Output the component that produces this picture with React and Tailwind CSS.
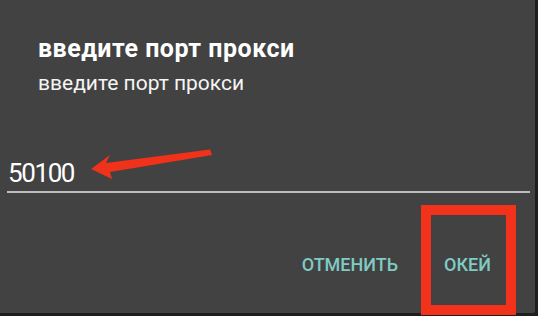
import React from "react";

export default function App() {
  return (
    <div className="w-[538px] h-[316px] bg-[#1e1e1e] relative overflow-hidden" style={{ fontFamily: "Roboto, 'Noto Sans', sans-serif" }}>
      <div className="w-[535px] h-[313px] bg-[#424242] flex flex-col rounded-br-[2px]">
        <div className="pl-[38px] pt-[34px]">
          <div className="text-white font-bold text-[25px] leading-[30px] tracking-[0.5px]">введите порт прокси</div>
          <div className="text-[#f5f5f5] text-[21px] leading-[26px] mt-[6px]">введите порт прокси</div>
        </div>
        <div className="mt-[61px] pl-[7px] pr-[5px]">
          <div className="text-white text-[26px] leading-[32px] pl-[1px] tracking-[-1.4px]">50100</div>
          <div className="h-[2px] bg-[#bdbdbd] mt-[2px]"></div>
        </div>
        <div className="flex justify-end items-center gap-[46px] pr-[44px] mt-[60px]">
          <span className="text-[#80cbc4] text-[18px] leading-[24px] font-medium">ОТМЕНИТЬ</span>
          <span className="text-[#80cbc4] text-[18px] leading-[24px] font-medium">ОКЕЙ</span>
        </div>
      </div>
      <svg className="absolute left-0 top-0" width="538" height="316" viewBox="0 0 538 316">
        <polygon points="91,169 110,155 106,163 210,149.5 212,155 110,172 112,179" fill="#f0321a" />
      </svg>
      <div className="absolute left-[421px] top-[205px] w-[95px] h-[110px] border-[10px] border-[#f2321a]"></div>
    </div>
  );
}
